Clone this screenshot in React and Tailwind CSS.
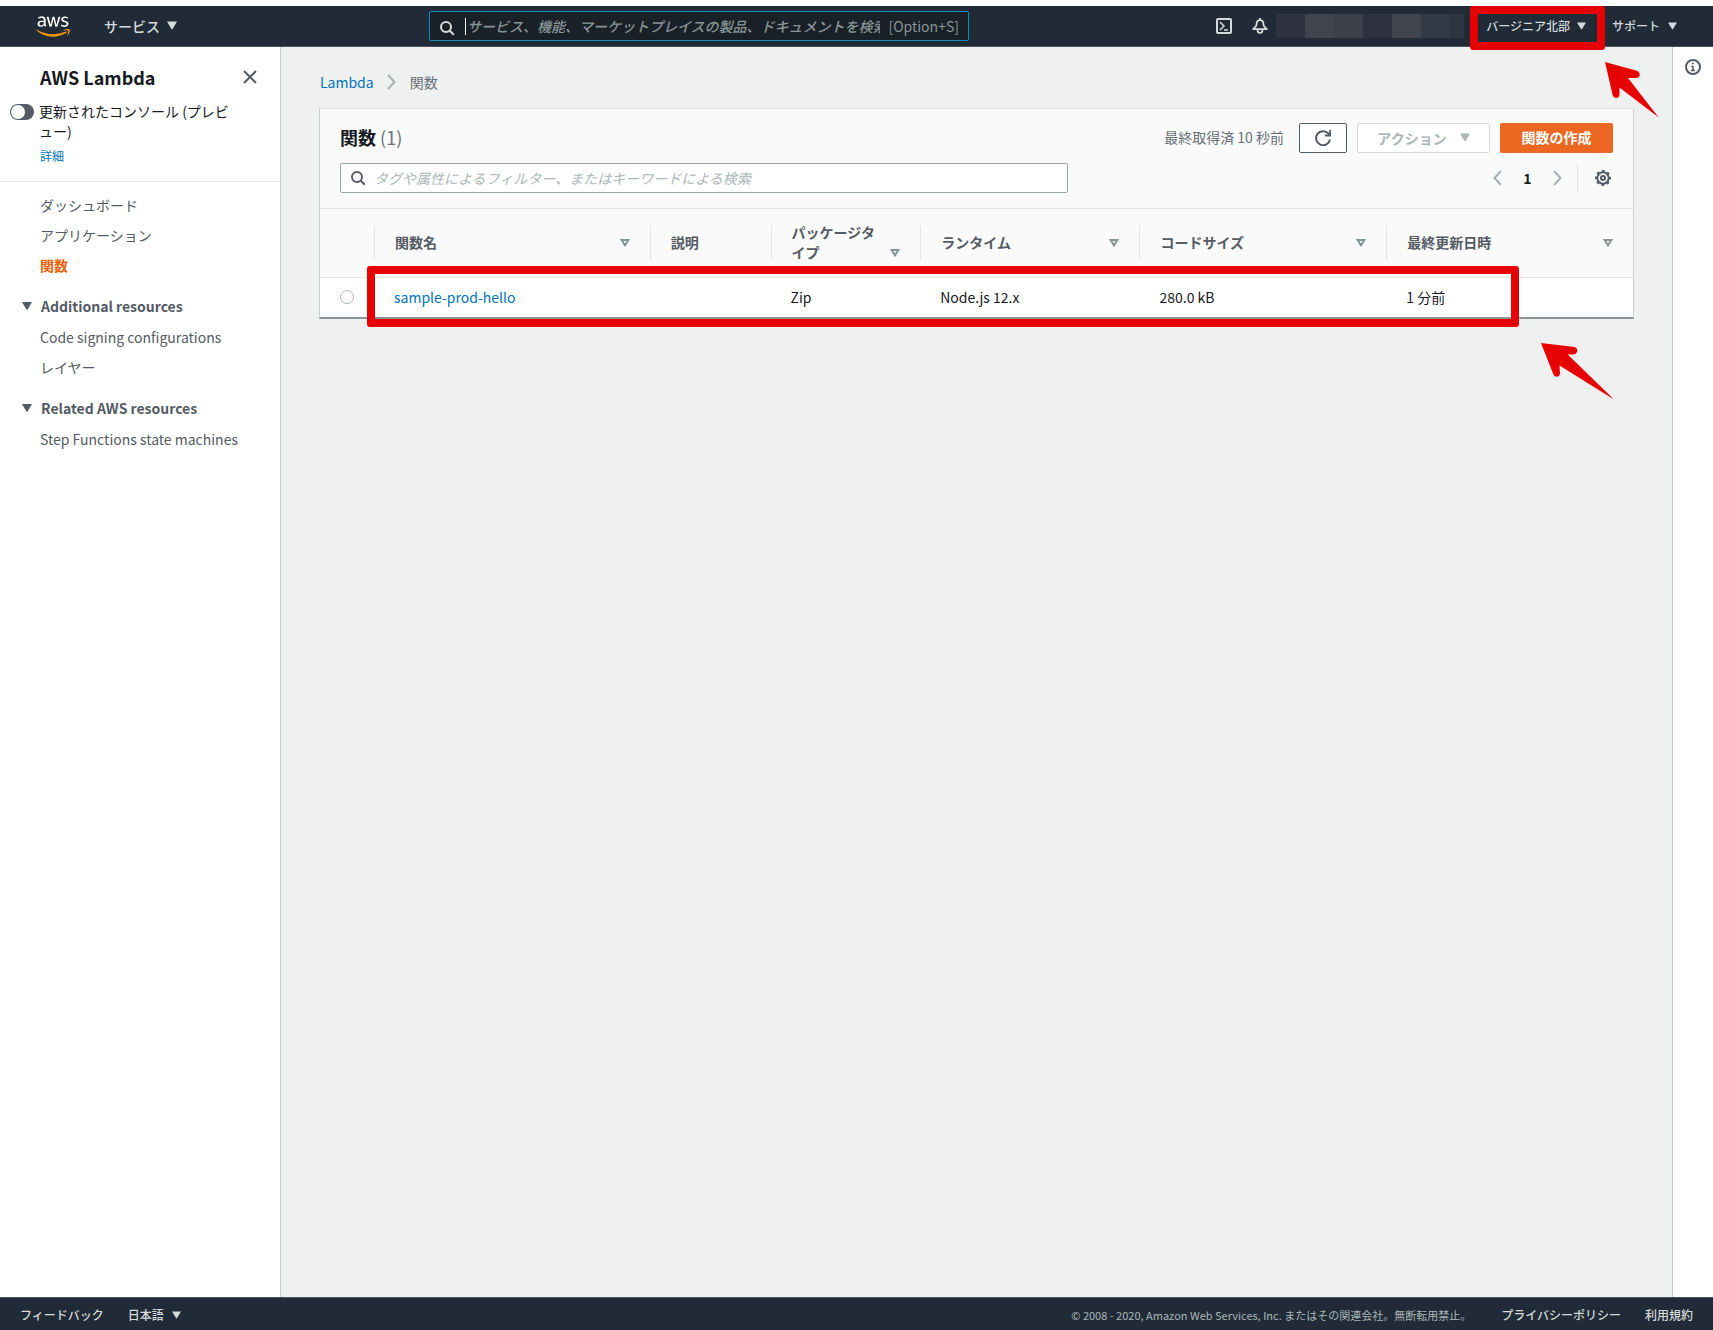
import { FaAws } from "react-icons/fa";

const Caret = ({ className = "" }) => (
  <svg viewBox="0 0 10 8" className={`shrink-0 fill-current ${className}`} aria-hidden="true">
    <path d="M0 0h10L5.6 7.4q-.6.9-1.2 0z" />
  </svg>
);

const SortIcon = () => (
  <svg viewBox="0 0 10 8" className="h-2 w-[10px] shrink-0" fill="none" stroke="#879596" strokeWidth="2" aria-hidden="true">
    <path d="M1.6 1h6.8L5 6.4z" />
  </svg>
);

const SearchIcon = ({ className = "" }) => (
  <svg viewBox="0 0 16 16" className={`size-4 shrink-0 ${className}`} fill="none" stroke="currentColor" strokeWidth="2" aria-hidden="true">
    <circle cx="7" cy="7" r="5" />
    <path d="m10.8 10.8 4 4" />
  </svg>
);

const Chevron = ({ flip = false, className = "" }) => (
  <svg viewBox="0 0 9 16" className={`h-4 w-[9px] shrink-0 ${className}`} fill="none" stroke="#a3b1b2" strokeWidth="2" aria-hidden="true">
    <path d={flip ? "M8 1 1.5 8 8 15" : "M1 1l6.5 7L1 15"} />
  </svg>
);

const GearIcon = () => (
  <svg viewBox="0 0 16 16" className="size-4" fill="none" stroke="#545b64" strokeWidth="2" aria-hidden="true">
    <circle cx="8" cy="8" r="5.7" />
    <circle cx="8" cy="8" r="2" />
    <circle cx="8" cy="8" r="7" strokeWidth="2" strokeDasharray="2.75 2.75" strokeDashoffset="1.37" />
  </svg>
);

const Mosaic = () => (
  <div className="flex h-6" aria-hidden="true">
    <span className="w-[29px] bg-[#2e3240]" />
    <span className="w-[29px] bg-[#3f444e]" />
    <span className="w-[29px] bg-[#3c404b]" />
    <span className="w-[29px] bg-[#2e3240]" />
    <span className="w-[29px] bg-[#3f444e]" />
    <span className="w-[29px] bg-[#343946]" />
    <span className="w-[14px] bg-[#2e3442]" />
  </div>
);

function Header() {
  return (
    <header className="relative z-10 flex h-[41px] items-center border-b border-[#4b545e] bg-[#212b37] pl-9 pr-9 text-[#d5dbdb]">
      <a href="#home" aria-label="AWS" className="relative mr-[34px] h-[27px] w-[34px]">
        <FaAws className="absolute inset-0 h-[27px] w-[34px] text-white [clip-path:inset(0_0_38%_0)]" />
        <FaAws className="absolute inset-0 h-[27px] w-[34px] text-[#ff9900] [clip-path:inset(62%_0_0_0)]" />
      </a>
      <button className="flex items-center gap-[7px] pb-px text-sm font-medium">
        サービス
        <Caret className="h-[9px] w-[10px]" />
      </button>
      <label className="ml-[252px] flex h-[30px] w-[540px] items-center rounded-xs border border-[#0f8dbf] bg-[#1a2028] px-[9px] text-sm">
        <SearchIcon className="mt-1 text-[#d5dbdb]" />
        <span className="ml-[10px] h-[17px] w-px shrink-0 bg-white" />
        <input
          aria-label="検索"
          placeholder="サービス、機能、マーケットプレイスの製品、ドキュメントを検索"
          className="ml-px min-w-0 flex-1 bg-transparent font-medium outline-none placeholder:italic placeholder:text-[#879596]"
        />
        <span className="ml-2 text-[#879596]">[Option+S]</span>
      </label>
      <div className="ml-auto flex items-center">
        <button aria-label="CloudShell">
          <svg viewBox="0 0 16 16" className="size-4" fill="none" stroke="currentColor" strokeWidth="2" strokeLinejoin="round">
            <rect x="1" y="1" width="14" height="14" rx="1" />
            <path d="m4 4 4 4-4 4M8 12h4" strokeWidth="1.6" />
          </svg>
        </button>
        <button aria-label="通知" className="ml-5 mr-2">
          <svg viewBox="0 0 16 16" className="size-4" fill="none" stroke="currentColor" strokeWidth="1.8" strokeLinejoin="round">
            <path d="M8 0v2.500M8 2.200C5.800 2.200 4.600 4 4.600 6.200L4 8.200 1.200 11.200h13.600L12 8.200l-.6-2c0-2.200-1.200-4-3.400-4z" />
            <path d="M5.500 11.800c0 4.200 5 4.200 5 0" />
          </svg>
        </button>
        <Mosaic />
        <div className="relative ml-[22px]">
          <button className="flex items-center gap-[7px] pb-px text-xs font-medium">
            バージニア北部
            <Caret className="h-2 w-[9px]" />
          </button>
          <span className="pointer-events-none absolute -bottom-[15px] -left-4 -right-[19px] -top-[12px] rounded-[3px] border-8 border-[#e60202]" />
          <svg viewBox="0 0 54 56" className="pointer-events-none absolute left-[119px] top-[44px] h-14 w-[54px]" aria-hidden="true">
            <path d="M0 0 32 8.700Q35.500 10.500 34.500 14q-1 2.300-4 2H23L53.700 55.500 14.500 25.500v7.500q-.5 3-3.500 3-3-.5-3.500-3.500z" fill="#e60202" />
          </svg>
        </div>
        <button className="ml-[26px] flex items-center gap-2 pb-px text-xs font-medium">
          サポート
          <Caret className="h-2 w-[9px]" />
        </button>
      </div>
    </header>
  );
}

const NavLink = ({ children, active = false }) => (
  <li>
    <a href="#nav" className={active ? "font-bold text-[#eb5f07]" : "text-[#545b64]"}>
      {children}
    </a>
  </li>
);

const NavGroup = ({ title, children }) => (
  <section className="mt-[19px]">
    <button className="-ml-[18px] flex items-center gap-[9px] font-bold text-[#545b64]">
      <Caret className="h-2 w-[10px]" />
      {title}
    </button>
    <ul className="mt-[9px] space-y-2">{children}</ul>
  </section>
);

function Sidebar() {
  return (
    <nav className="w-[281px] shrink-0 border-r border-[#c6cccc] bg-white text-sm leading-[22px]">
      <div className="border-b border-[#e3e6e6] pb-[15px] pt-[19px]">
        <div className="flex items-center justify-between pl-10 pr-[23px]">
          <h2 className="text-lg font-bold leading-[22px] text-[#16191f]">AWS Lambda</h2>
          <button aria-label="閉じる" className="text-[#545b64]">
            <svg viewBox="0 0 14 14" className="size-[14px]" stroke="currentColor" strokeWidth="2">
              <path d="m1 1 12 12M13 1 1 13" />
            </svg>
          </button>
        </div>
        <label className="mt-[13px] flex gap-[5px] pl-[10px] pr-11 leading-5 text-[#16191f]">
          <input
            type="checkbox"
            role="switch"
            className="mt-[3px] h-4 w-6 shrink-0 appearance-none rounded-full bg-[#545b64] before:m-px before:block before:size-[14px] before:rounded-full before:bg-white"
          />
          <span>更新されたコンソール (プレビュー)</span>
        </label>
        <a href="#detail" className="ml-10 mt-[5px] block text-xs leading-5 text-[#0073bb]">
          詳細
        </a>
      </div>
      <div className="pl-10 pt-3">
        <ul className="space-y-2">
          <NavLink>ダッシュボード</NavLink>
          <NavLink>アプリケーション</NavLink>
          <NavLink active>関数</NavLink>
        </ul>
        <NavGroup title="Additional resources">
          <NavLink>Code signing configurations</NavLink>
          <NavLink>レイヤー</NavLink>
        </NavGroup>
        <NavGroup title="Related AWS resources">
          <NavLink>Step Functions state machines</NavLink>
        </NavGroup>
      </div>
    </nav>
  );
}

const columns = [
  { label: "関数名", sort: true },
  { label: "説明", sort: false },
  { label: "パッケージタイプ", sort: true },
  { label: "ランタイム", sort: true },
  { label: "コードサイズ", sort: true },
  { label: "最終更新日時", sort: true },
];

function FunctionsTable() {
  return (
    <table className="w-full table-fixed border-collapse text-left text-sm">
      <colgroup>
        <col className="w-[54px]" />
        <col className="w-[21%]" />
        <col className="w-[9.2%]" />
        <col className="w-[11.4%]" />
        <col className="w-[16.7%]" />
        <col className="w-[18.8%]" />
        <col />
      </colgroup>
      <thead>
        <tr className="border-b border-[#e3e6e6]">
          <td />
          {columns.map((c) => (
            <th key={c.label} scope="col" className="h-[68px] p-0 font-bold text-[#545b64]">
              <div className="flex h-[34px] items-center border-l border-[#e3e6e6] pb-px pl-5 pr-5 leading-5">
                {c.sort ? (
                  <button className="flex w-full items-end justify-between gap-2 text-left">
                    <span>{c.label}</span>
                    <span className="flex h-5 items-center pt-px">
                      <SortIcon />
                    </span>
                  </button>
                ) : (
                  c.label
                )}
              </div>
            </th>
          ))}
        </tr>
      </thead>
      <tbody className="bg-white text-[#16191f]">
        <tr className="h-10">
          <td className="pl-5">
            <input
              type="radio"
              name="function"
              aria-label="sample-prod-hello"
              className="block size-[14px] appearance-none rounded-full border border-[#aab7b8] bg-white"
            />
          </td>
          <td className="px-5">
            <a href="#fn" className="text-[#0073bb]">
              sample-prod-hello
            </a>
          </td>
          <td />
          <td className="px-5">Zip</td>
          <td className="px-5">Node.js 12.x</td>
          <td className="px-5">280.0 kB</td>
          <td className="px-5">1 分前</td>
        </tr>
      </tbody>
    </table>
  );
}

function Main() {
  return (
    <main className="min-w-0 flex-1 bg-[#eff1f1] pl-[38px] pr-[38px] pt-6">
      <nav aria-label="パンくず" className="flex items-center pl-px text-sm leading-[22px]">
        <a href="#lambda" className="text-[#0073bb]">
          Lambda
        </a>
        <Chevron className="ml-[13px] mr-[14px]" />
        <span className="text-[#687078]">関数</span>
      </nav>
      <section className="relative mt-[15px] border border-b-2 border-[#c9d0d0] border-b-[#879596] border-t-[#e3e6e6] bg-[#fafafa]">
        <div className="border-b border-[#e3e6e6] px-5 pb-[15px] pt-[14px]">
          <div className="flex h-[30px] items-center">
            <h1 className="pb-0.5 text-lg font-bold text-[#16191f]">
              関数 <span className="font-normal text-[#687078]">(1)</span>
            </h1>
            <span className="ml-auto mr-[15px] pb-0.5 text-sm text-[#687078]">最終取得済 10 秒前</span>
            <button aria-label="更新" className="flex h-[30px] w-12 items-center justify-center rounded-xs border border-[#545b64] bg-white">
              <svg viewBox="0 0 16 16" className="size-4" fill="none" stroke="#545b64" strokeWidth="2">
                <path d="M15 9.500A7 7 0 1 1 13.500 3.700L15 5.200" />
                <path d="M15.200 0v5.500H10" />
              </svg>
            </button>
            <button disabled className="ml-[10px] flex h-[30px] w-[133px] items-center justify-center gap-[13px] rounded-xs border border-[#d5dbdb] bg-white pb-px text-sm font-bold text-[#aab7b8]">
              アクション
              <Caret className="h-[9px] w-[10px]" />
            </button>
            <button className="ml-[10px] h-[30px] w-[113px] rounded-xs bg-[#ec6722] pb-0.5 text-sm font-bold text-white">関数の作成</button>
          </div>
          <div className="mt-[10px] flex h-[30px] items-center justify-between">
            <label className="flex h-[30px] w-[57.2%] items-center gap-2 rounded-xs border border-[#95a5a6] bg-white px-[9px] text-[#545b64]">
              <SearchIcon />
              <input
                aria-label="フィルター"
                placeholder="タグや属性によるフィルター、またはキーワードによる検索"
                className="min-w-0 flex-1 bg-transparent text-sm outline-none placeholder:italic placeholder:text-[#aab7b8]"
              />
            </label>
            <div className="flex items-center">
              <button aria-label="前へ">
                <Chevron flip />
              </button>
              <button className="w-[51px] text-center text-sm font-bold text-[#16191f]">1</button>
              <button aria-label="次へ">
                <Chevron />
              </button>
              <span className="ml-[15px] mr-[17px] h-[30px] w-px bg-[#e3e6e6]" />
              <button aria-label="設定" className="mr-[2px]">
                <GearIcon />
              </button>
            </div>
          </div>
        </div>
        <FunctionsTable />
        <span className="pointer-events-none absolute -bottom-[10px] left-[47px] right-[114px] h-[61px] rounded-[3px] border-8 border-[#e60202]" />
        <svg viewBox="0 0 73 57" className="pointer-events-none absolute right-[19px] top-[234px] h-[57px] w-[73px]" aria-hidden="true">
          <path d="M0 0 33.500 4q3 1 2.700 4-.7 3.300-4 3.500H26.700L73 56.500 18.500 22.500 19 31q-.8 3-3.500 2.800-2.500-.3-3.500-3.300z" fill="#e60202" />
        </svg>
      </section>
    </main>
  );
}

function Footer() {
  return (
    <footer className="flex h-[33px] items-center border-t border-[#4b545e] bg-[#212b37] px-5 pt-0.5 text-xs font-medium text-[#d5dbdb]">
      <a href="#feedback">フィードバック</a>
      <button className="ml-6 flex items-center gap-2">
        日本語
        <Caret className="h-2 w-[9px]" />
      </button>
      <span className="ml-auto text-[11px] font-normal text-[#aab7b8]">
        © 2008 - 2020, Amazon Web Services, Inc. またはその関連会社。無断転用禁止。
      </span>
      <a href="#privacy" className="ml-[30px]">
        プライバシーポリシー
      </a>
      <a href="#terms" className="ml-6">
        利用規約
      </a>
    </footer>
  );
}

export default function App() {
  return (
    <div className="flex min-h-screen flex-col bg-white pt-[6px] font-['Noto_Sans_CJK_JP',sans-serif]">
      <Header />
      <div className="flex flex-1">
        <Sidebar />
        <Main />
        <aside className="flex w-[41px] shrink-0 justify-center border-l border-[#c6cccc] bg-white pt-3">
          <button aria-label="情報" className="size-4">
            <svg viewBox="0 0 16 16" className="size-4" fill="none" stroke="#545b64" strokeWidth="2">
              <circle cx="8" cy="8" r="7" />
              <path d="M7 4.500h2M6.300 7.500h2M8 7v4M6 11.500h4" strokeWidth="1.600" />
            </svg>
          </button>
        </aside>
      </div>
      <Footer />
    </div>
  );
}
